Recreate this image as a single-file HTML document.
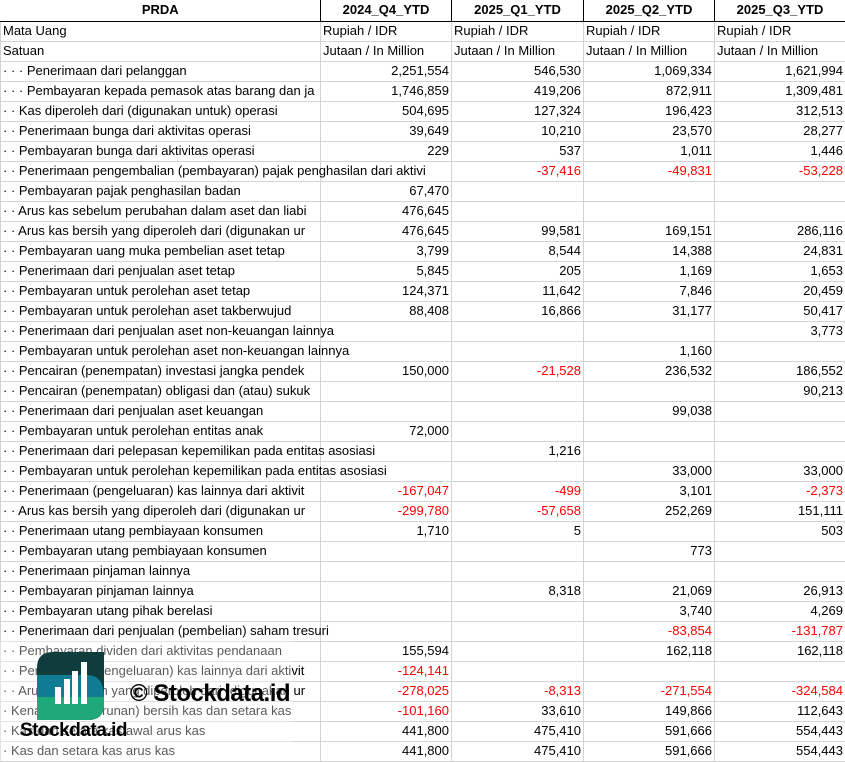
<!DOCTYPE html>
<html><head><meta charset="utf-8"><style>
*{margin:0;padding:0;box-sizing:border-box}
body{width:845px;height:761px;overflow:hidden;background:#fff;font-family:"Liberation Sans",sans-serif;font-size:13px;color:#000;position:relative}
table{border-collapse:collapse;table-layout:fixed;position:absolute;left:0;top:0;width:845px}
td{height:20px;border:1px solid #d4d4d4;white-space:nowrap;overflow:hidden;padding:0 2px;line-height:18px}
td.s{overflow:visible}
tr.h td{height:21px;font-weight:bold;text-align:center;border:1px solid #000;border-top:none}
tr.h td:first-child{border-left:none}
td.n{text-align:right}
.r{color:#f00}
.ov{position:absolute;left:0;top:641px;width:292px;height:120px;background:rgba(255,255,255,0.35)}
</style></head><body>
<table>
<colgroup><col style="width:320px"><col style="width:131px"><col style="width:132px"><col style="width:131px"><col style="width:131px"></colgroup>
<tr class="h"><td>PRDA</td><td>2024_Q4_YTD</td><td>2025_Q1_YTD</td><td>2025_Q2_YTD</td><td>2025_Q3_YTD</td></tr>
<tr><td>Mata Uang</td><td>Rupiah / IDR</td><td>Rupiah / IDR</td><td>Rupiah / IDR</td><td>Rupiah / IDR</td></tr>
<tr><td>Satuan</td><td>Jutaan / In Million</td><td>Jutaan / In Million</td><td>Jutaan / In Million</td><td>Jutaan / In Million</td></tr>
<tr><td>· · · Penerimaan dari pelanggan</td><td class="n">2,251,554</td><td class="n">546,530</td><td class="n">1,069,334</td><td class="n">1,621,994</td></tr>
<tr><td>· · · Pembayaran kepada pemasok atas barang dan ja</td><td class="n">1,746,859</td><td class="n">419,206</td><td class="n">872,911</td><td class="n">1,309,481</td></tr>
<tr><td>· · Kas diperoleh dari (digunakan untuk) operasi</td><td class="n">504,695</td><td class="n">127,324</td><td class="n">196,423</td><td class="n">312,513</td></tr>
<tr><td>· · Penerimaan bunga dari aktivitas operasi</td><td class="n">39,649</td><td class="n">10,210</td><td class="n">23,570</td><td class="n">28,277</td></tr>
<tr><td>· · Pembayaran bunga dari aktivitas operasi</td><td class="n">229</td><td class="n">537</td><td class="n">1,011</td><td class="n">1,446</td></tr>
<tr><td class="s">· · Penerimaan pengembalian (pembayaran) pajak penghasilan dari aktivi</td><td class="n"></td><td class="n r">-37,416</td><td class="n r">-49,831</td><td class="n r">-53,228</td></tr>
<tr><td>· · Pembayaran pajak penghasilan badan</td><td class="n">67,470</td><td></td><td></td><td></td></tr>
<tr><td>· · Arus kas sebelum perubahan dalam aset dan liabi</td><td class="n">476,645</td><td></td><td></td><td></td></tr>
<tr><td>· · Arus kas bersih yang diperoleh dari (digunakan ur</td><td class="n">476,645</td><td class="n">99,581</td><td class="n">169,151</td><td class="n">286,116</td></tr>
<tr><td>· · Pembayaran uang muka pembelian aset tetap</td><td class="n">3,799</td><td class="n">8,544</td><td class="n">14,388</td><td class="n">24,831</td></tr>
<tr><td>· · Penerimaan dari penjualan aset tetap</td><td class="n">5,845</td><td class="n">205</td><td class="n">1,169</td><td class="n">1,653</td></tr>
<tr><td>· · Pembayaran untuk perolehan aset tetap</td><td class="n">124,371</td><td class="n">11,642</td><td class="n">7,846</td><td class="n">20,459</td></tr>
<tr><td>· · Pembayaran untuk perolehan aset takberwujud</td><td class="n">88,408</td><td class="n">16,866</td><td class="n">31,177</td><td class="n">50,417</td></tr>
<tr><td class="s">· · Penerimaan dari penjualan aset non-keuangan lainnya</td><td></td><td></td><td></td><td class="n">3,773</td></tr>
<tr><td class="s">· · Pembayaran untuk perolehan aset non-keuangan lainnya</td><td></td><td></td><td class="n">1,160</td><td></td></tr>
<tr><td>· · Pencairan (penempatan) investasi jangka pendek</td><td class="n">150,000</td><td class="n r">-21,528</td><td class="n">236,532</td><td class="n">186,552</td></tr>
<tr><td class="s">· · Pencairan (penempatan) obligasi dan (atau) sukuk</td><td></td><td></td><td></td><td class="n">90,213</td></tr>
<tr><td class="s">· · Penerimaan dari penjualan aset keuangan</td><td></td><td></td><td class="n">99,038</td><td></td></tr>
<tr><td>· · Pembayaran untuk perolehan entitas anak</td><td class="n">72,000</td><td></td><td></td><td></td></tr>
<tr><td class="s">· · Penerimaan dari pelepasan kepemilikan pada entitas asosiasi</td><td></td><td class="n">1,216</td><td></td><td></td></tr>
<tr><td class="s">· · Pembayaran untuk perolehan kepemilikan pada entitas asosiasi</td><td></td><td></td><td class="n">33,000</td><td class="n">33,000</td></tr>
<tr><td>· · Penerimaan (pengeluaran) kas lainnya dari aktivit</td><td class="n r">-167,047</td><td class="n r">-499</td><td class="n">3,101</td><td class="n r">-2,373</td></tr>
<tr><td>· · Arus kas bersih yang diperoleh dari (digunakan ur</td><td class="n r">-299,780</td><td class="n r">-57,658</td><td class="n">252,269</td><td class="n">151,111</td></tr>
<tr><td>· · Penerimaan utang pembiayaan konsumen</td><td class="n">1,710</td><td class="n">5</td><td></td><td class="n">503</td></tr>
<tr><td class="s">· · Pembayaran utang pembiayaan konsumen</td><td></td><td></td><td class="n">773</td><td></td></tr>
<tr><td class="s">· · Penerimaan pinjaman lainnya</td><td></td><td></td><td></td><td></td></tr>
<tr><td class="s">· · Pembayaran pinjaman lainnya</td><td></td><td class="n">8,318</td><td class="n">21,069</td><td class="n">26,913</td></tr>
<tr><td class="s">· · Pembayaran utang pihak berelasi</td><td></td><td></td><td class="n">3,740</td><td class="n">4,269</td></tr>
<tr><td class="s">· · Penerimaan dari penjualan (pembelian) saham tresuri</td><td></td><td></td><td class="n r">-83,854</td><td class="n r">-131,787</td></tr>
<tr><td>· · Pembayaran dividen dari aktivitas pendanaan</td><td class="n">155,594</td><td></td><td class="n">162,118</td><td class="n">162,118</td></tr>
<tr><td>· · Penerimaan (pengeluaran) kas lainnya dari aktivit</td><td class="n r">-124,141</td><td></td><td></td><td></td></tr>
<tr><td>· · Arus kas bersih yang diperoleh dari (digunakan ur</td><td class="n r">-278,025</td><td class="n r">-8,313</td><td class="n r">-271,554</td><td class="n r">-324,584</td></tr>
<tr><td>· Kenaikan (penurunan) bersih kas dan setara kas</td><td class="n r">-101,160</td><td class="n">33,610</td><td class="n">149,866</td><td class="n">112,643</td></tr>
<tr><td>· Kas dan setara kas awal arus kas</td><td class="n">441,800</td><td class="n">475,410</td><td class="n">591,666</td><td class="n">554,443</td></tr>
<tr><td>· Kas dan setara kas arus kas</td><td class="n">441,800</td><td class="n">475,410</td><td class="n">591,666</td><td class="n">554,443</td></tr>
</table>
<div class="ov"></div>
<svg style="position:absolute;left:37px;top:652px" width="67" height="68" viewBox="0 0 67 68">
<defs><clipPath id="c"><path d="M16 0H67V52Q67 68 51 68H0V16Q0 0 16 0Z"/></clipPath></defs>
<g clip-path="url(#c)">
<rect x="0" y="0" width="67" height="68" fill="#0f3d3e"/>
<path d="M0 23H50Q67 23 67 45V68H0Z" fill="#0f7c93"/>
<rect x="0" y="45" width="67" height="23" fill="#1fa97b"/>
</g>
<rect x="18" y="35" width="6" height="17" fill="#fff"/>
<rect x="27" y="27" width="6" height="25" fill="#fff"/>
<rect x="35" y="19" width="6" height="33" fill="#fff"/>
<rect x="44" y="10" width="6" height="42" fill="#fff"/>
</svg>
<div style="position:absolute;left:20px;top:720px;font-weight:bold;font-size:19px;letter-spacing:-0.5px;color:#000">Stockdata.id</div>
<div style="position:absolute;left:130px;top:680px;font-weight:bold;font-size:24px;letter-spacing:-0.5px;color:#000">© Stockdata.id</div>
</body></html>
